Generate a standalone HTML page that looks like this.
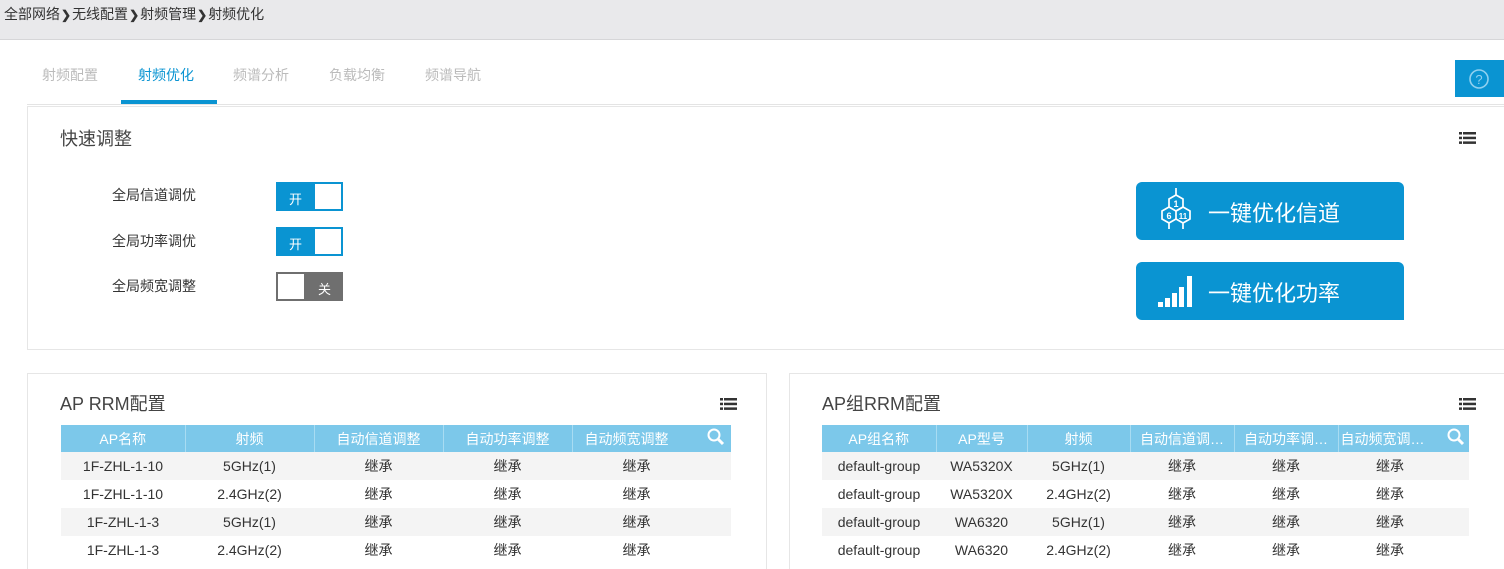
<!DOCTYPE html>
<html><head><meta charset="utf-8"><style>
*{box-sizing:border-box;margin:0;padding:0}
html,body{width:1504px;height:569px;overflow:hidden}
body{background:#fff;font-family:"Liberation Sans","Noto Sans CJK SC",sans-serif;color:#333;position:relative}
.top{position:absolute;left:0;top:0;width:1504px;height:40px;background:#e9e9eb;border-bottom:1px solid #d6d6d8;font-size:14px;color:#333;padding:4px 0 0 4px}
.top b{font-size:12px;margin:0 1px}
.tab{position:absolute;top:65px;font-size:14px;color:#bbb}
.ul{position:absolute;left:121px;top:100px;width:96px;height:4px;background:#0a94d2}
.line{position:absolute;left:27px;top:104px;width:1477px;height:1px;background:#e4e4e4}
.help{position:absolute;left:1455px;top:60px;width:49px;height:37px;background:#0a94d2}
.panel{position:absolute;border:1px solid #e6e6e6;background:#fff}
.h{position:absolute;font-size:18px;color:#444}
.menu{position:absolute;width:17px;height:12px}
.lbl{position:absolute;left:112px;font-size:14px;color:#333}
.tg{position:absolute;left:276px;width:67px;height:29px;border:2px solid #0a94d2;background:#0a94d2}
.tg span{position:absolute;color:#fff;font-size:13px;top:5px}
.tg i{position:absolute;top:0;width:26px;height:25px;background:#fff}
.btn{position:absolute;left:1136px;width:268px;height:58px;background:#0a94d2;border-radius:6px 6px 0 6px;color:#fff;font-size:22px}
table{position:absolute;border-collapse:collapse;font-size:14px;color:#333}
th{background:#7cc8ea;color:#fff;font-weight:normal;height:27px;border-right:1px solid #a8dcf2;font-size:14px;white-space:nowrap;overflow:hidden}
td{height:28px;text-align:center;white-space:nowrap}
tr:nth-child(even) td{background:#f4f4f4}
</style></head><body>
<div class="top">全部网络<b>❯</b>无线配置<b>❯</b>射频管理<b>❯</b>射频优化</div>
<div class="tab" style="left:42px">射频配置</div>
<div class="tab" style="left:138px;color:#0a94d2">射频优化</div>
<div class="tab" style="left:233px">频谱分析</div>
<div class="tab" style="left:329px">负载均衡</div>
<div class="tab" style="left:425px">频谱导航</div>
<div class="ul"></div><div class="line"></div>
<div class="help"><svg width="49" height="37"><circle cx="24" cy="19" r="9" fill="none" stroke="#8fd0ef" stroke-width="1.6"/><text x="24" y="24" font-size="13" fill="#8fd0ef" text-anchor="middle" font-family="Liberation Sans">?</text></svg></div>

<div class="panel" style="left:27px;top:106px;width:1490px;height:244px"></div>
<div class="h" style="left:60px;top:125px">快速调整</div>
<svg class="menu" style="left:1459px;top:132px" viewBox="0 0 17 12"><g fill="#333"><rect x="0" y="0" width="3" height="2.5"/><rect x="4" y="0" width="13" height="2.5"/><rect x="0" y="4.7" width="3" height="2.5"/><rect x="4" y="4.7" width="13" height="2.5"/><rect x="0" y="9.4" width="3" height="2.5"/><rect x="4" y="9.4" width="13" height="2.5"/></g></svg>
<div class="lbl" style="top:185px">全局信道调优</div>
<div class="lbl" style="top:231px">全局功率调优</div>
<div class="lbl" style="top:276px">全局频宽调整</div>
<div class="tg" style="top:182px"><span style="left:11px">开</span><i style="right:0"></i></div>
<div class="tg" style="top:227px"><span style="left:11px">开</span><i style="right:0"></i></div>
<div class="tg" style="top:272px;background:#6f6f6f;border-color:#6f6f6f"><i style="left:0"></i><span style="left:40px">关</span></div>

<div class="btn" style="top:182px"><svg style="position:absolute;left:22px;top:6px" width="36" height="48" viewBox="0 0 36 48"><g fill="none" stroke="#fff" stroke-width="1.7"><path d="M18 0v7M18 7l7 4v8l-7 4-7-4v-8z"/><path d="M11 19l-7 4v8l7 4 7-4v-8M18 23l7-4 7 4v8l-7 4-7-4M11 35v6M25 35v6"/></g><text x="18" y="19" font-size="9" fill="#fff" text-anchor="middle" font-family="Liberation Sans" font-weight="bold">1</text><text x="11" y="31" font-size="9" fill="#fff" text-anchor="middle" font-family="Liberation Sans" font-weight="bold">6</text><text x="25" y="31" font-size="8" fill="#fff" text-anchor="middle" font-family="Liberation Sans" font-weight="bold">11</text></svg><span style="position:absolute;left:72px;top:14px">一键优化信道</span></div>
<div class="btn" style="top:262px"><svg style="position:absolute;left:22px;top:14px" width="36" height="32"><g fill="#fff"><rect x="0" y="26" width="5" height="5"/><rect x="7" y="22" width="5" height="9"/><rect x="14" y="17" width="5" height="14"/><rect x="21" y="11" width="5" height="20"/><rect x="29" y="0" width="5" height="31"/></g></svg><span style="position:absolute;left:72px;top:14px">一键优化功率</span></div>

<div class="panel" style="left:27px;top:373px;width:740px;height:210px"></div>
<div class="h" style="left:60px;top:390px">AP RRM配置</div>
<svg class="menu" style="left:720px;top:398px" viewBox="0 0 17 12"><g fill="#333"><rect x="0" y="0" width="3" height="2.5"/><rect x="4" y="0" width="13" height="2.5"/><rect x="0" y="4.7" width="3" height="2.5"/><rect x="4" y="4.7" width="13" height="2.5"/><rect x="0" y="9.4" width="3" height="2.5"/><rect x="4" y="9.4" width="13" height="2.5"/></g></svg>
<table style="left:61px;top:425px;width:670px">
<tr><th style="width:124px">AP名称</th><th style="width:129px">射频</th><th style="width:129px">自动信道调整</th><th style="width:129px">自动功率调整</th><th style="width:129px;border:0;text-align:left;padding-left:12px">自动频宽调整</th><th style="width:30px;border:0"><svg width="18" height="18"><circle cx="7" cy="7" r="5.5" fill="none" stroke="#fff" stroke-width="2"/><path d="M11 11l5 5" stroke="#fff" stroke-width="3"/></svg></th></tr>
<tr><td>1F-ZHL-1-10</td><td>5GHz(1)</td><td>继承</td><td>继承</td><td>继承</td><td></td></tr>
<tr><td>1F-ZHL-1-10</td><td>2.4GHz(2)</td><td>继承</td><td>继承</td><td>继承</td><td></td></tr>
<tr><td>1F-ZHL-1-3</td><td>5GHz(1)</td><td>继承</td><td>继承</td><td>继承</td><td></td></tr>
<tr><td>1F-ZHL-1-3</td><td>2.4GHz(2)</td><td>继承</td><td>继承</td><td>继承</td><td></td></tr>
</table>

<div class="panel" style="left:789px;top:373px;width:730px;height:210px"></div>
<div class="h" style="left:822px;top:390px">AP组RRM配置</div>
<svg class="menu" style="left:1459px;top:398px" viewBox="0 0 17 12"><g fill="#333"><rect x="0" y="0" width="3" height="2.5"/><rect x="4" y="0" width="13" height="2.5"/><rect x="0" y="4.7" width="3" height="2.5"/><rect x="4" y="4.7" width="13" height="2.5"/><rect x="0" y="9.4" width="3" height="2.5"/><rect x="4" y="9.4" width="13" height="2.5"/></g></svg>
<table style="left:822px;top:425px;width:647px;table-layout:fixed">
<tr><th style="width:114px">AP组名称</th><th style="width:91px">AP型号</th><th style="width:103px">射频</th><th style="width:104px">自动信道调…</th><th style="width:104px">自动功率调…</th><th style="width:104px;border:0;text-align:left;padding-left:2px">自动频宽调…</th><th style="width:27px;border:0"><svg width="18" height="18"><circle cx="7" cy="7" r="5.5" fill="none" stroke="#fff" stroke-width="2"/><path d="M11 11l5 5" stroke="#fff" stroke-width="3"/></svg></th></tr>
<tr><td>default-group</td><td>WA5320X</td><td>5GHz(1)</td><td>继承</td><td>继承</td><td>继承</td><td></td></tr>
<tr><td>default-group</td><td>WA5320X</td><td>2.4GHz(2)</td><td>继承</td><td>继承</td><td>继承</td><td></td></tr>
<tr><td>default-group</td><td>WA6320</td><td>5GHz(1)</td><td>继承</td><td>继承</td><td>继承</td><td></td></tr>
<tr><td>default-group</td><td>WA6320</td><td>2.4GHz(2)</td><td>继承</td><td>继承</td><td>继承</td><td></td></tr>
</table>
</body></html>
